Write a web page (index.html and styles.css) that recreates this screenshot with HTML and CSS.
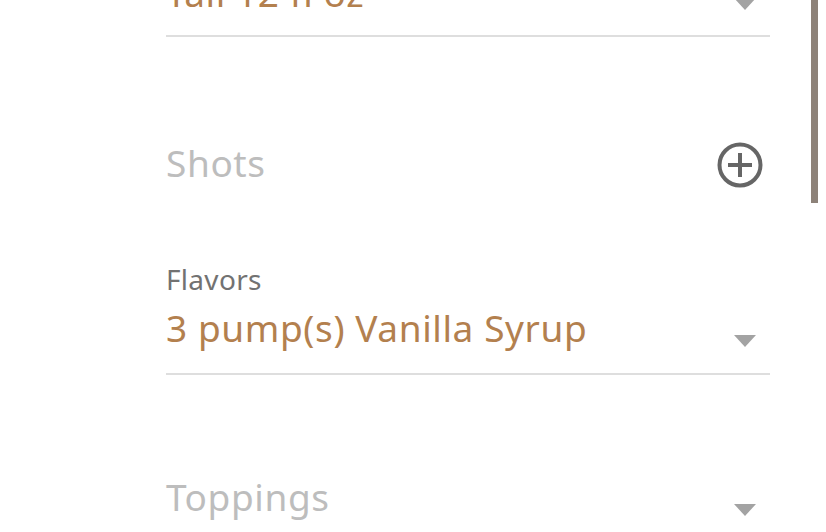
FILE: index.html
```html
<!DOCTYPE html>
<html lang="en">
<head>
    <meta charset="UTF-8">
    <meta name="viewport" content="width=device-width, initial-scale=1.0">
    <title>Customize Drink</title>
    <link rel="stylesheet" href="styles.css">
</head>
<body>
    <div class="scroll-view">
        <div class="scroll-indicator"></div>

        <form class="customize-form">
            <div class="field field-size">
                <div class="select-row">
                    <span class="select-value">Tall 12 fl oz</span>
                    <span class="caret"></span>
                </div>
            </div>

            <div class="field field-shots">
                <div class="add-row">
                    <span class="placeholder">Shots</span>
                    <svg class="add-icon" width="46" height="46" viewBox="0 0 46 46">
                        <circle cx="23" cy="23" r="20.5" fill="none" stroke="#666" stroke-width="4"/>
                        <path d="M23 11v24M11 23h24" stroke="#666" stroke-width="4"/>
                    </svg>
                </div>
            </div>

            <div class="field field-flavors">
                <label class="field-label">Flavors</label>
                <div class="select-row">
                    <span class="select-value">3 pump(s) Vanilla Syrup</span>
                    <span class="caret"></span>
                </div>
            </div>

            <div class="field field-toppings">
                <div class="add-row">
                    <span class="placeholder">Toppings</span>
                    <span class="caret"></span>
                </div>
            </div>
        </form>
    </div>
</body>
</html>
```

FILE: styles.css
```css
* {
    margin: 0;
    padding: 0;
    box-sizing: border-box;
}

body {
    font-family: "Noto Sans", "Lato", sans-serif;
    background: #ffffff;
    width: 826px;
    height: 532px;
    overflow: hidden;
}

.scroll-view {
    position: relative;
    height: 532px;
    overflow: hidden;
}

.scroll-indicator {
    position: absolute;
    top: 0;
    left: 811px;
    width: 7px;
    height: 203px;
    background: #8d8279;
}

.customize-form {
    width: 604px;
    margin-left: 166px;
    margin-top: -27px;
}

.select-row,
.add-row {
    display: flex;
    justify-content: space-between;
    align-items: flex-start;
}

.select-row {
    padding-bottom: 22px;
    border-bottom: 2px solid #dedede;
}

.select-value,
.placeholder {
    font-size: 37px;
    line-height: 40px;
    letter-spacing: 0.6px;
}

.select-value {
    color: #b3804e;
}

.placeholder {
    color: #bdbdbd;
}

.caret {
    align-self: flex-end;
    width: 0;
    height: 0;
    margin-right: 14px;
    margin-bottom: 1px;
    border-left: 11.5px solid transparent;
    border-right: 11.5px solid transparent;
    border-top: 12px solid #a3a3a3;
}

.field-size .caret {
    margin-bottom: 3px;
}

.field-shots {
    margin-top: 106px;
}

.add-icon {
    margin-top: -1px;
    margin-right: 7px;
}

.field-flavors {
    margin-top: 76px;
}

.field-label {
    display: block;
    font-size: 28px;
    line-height: 30px;
    letter-spacing: 0.3px;
    color: #727272;
    margin-bottom: 14px;
}

.field-flavors .select-row {
    padding-bottom: 25px;
}

.field-toppings {
    margin-top: 102px;
}
```
